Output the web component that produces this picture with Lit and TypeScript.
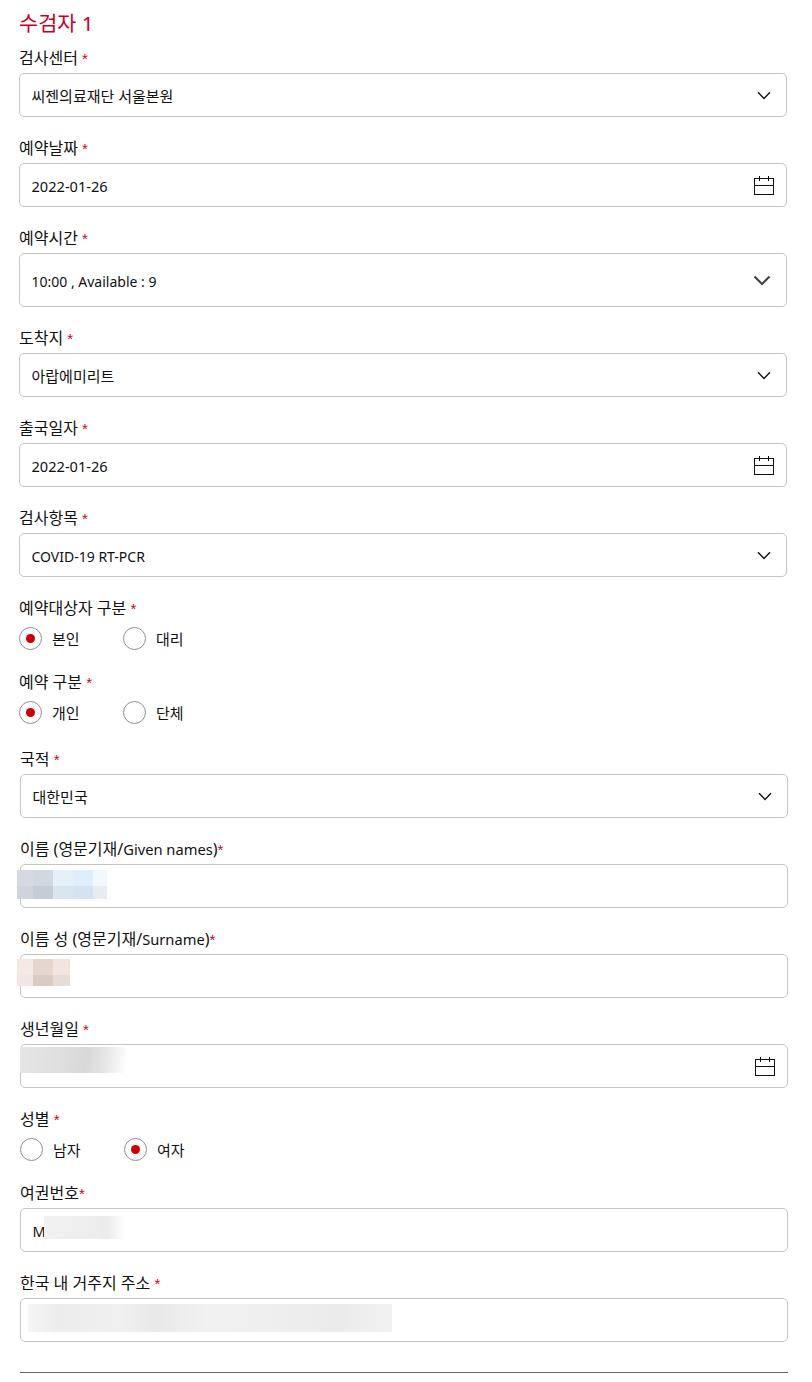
import { LitElement, html, css, svg } from "lit";
import { customElement } from "lit/decorators.js";

type Patch = { x: number; y: number; w: number; h: number; kind: string; cols?: number[]; top?: number; colors?: string[] };
type Field =
  | { type: "select" | "date" | "text" | "bigselect"; label: string; gap?: boolean; value?: string; vc?: string; patch?: Patch }
  | { type: "radio"; label: string; options: [string, boolean][] };

const chevron = svg`<svg class="chev" width="14" height="9" viewBox="0 0 14 9"><path d="M1 1.2 L7 7.4 L13 1.2" fill="none" stroke="#111" stroke-width="1.4"/></svg>`;
const bigChevron = svg`<svg class="chev big" width="18" height="11" viewBox="0 0 18 11"><path d="M1.5 1.5 L9 9 L16.5 1.5" fill="none" stroke="#444" stroke-width="2.2"/></svg>`;
const calendar = svg`<svg class="cal" width="20" height="19" viewBox="0 0 20 19" shape-rendering="crispEdges"><path d="M.5 2.5h19v16H.5zM.5 9.5h19M5.5 0v5M14.5 0v5" fill="none" stroke="#111" stroke-width="1"/></svg>`;

const groupA: Field[] = [
  { type: "select", label: "검사센터", gap: true, value: "씨젠의료재단 서울본원", vc: "ko" },
  { type: "date", label: "예약날짜", gap: true, value: "2022-01-26", vc: "num" },
  { type: "bigselect", label: "예약시간", gap: true, value: "10:00 , Available : 9", vc: "lat" },
  { type: "select", label: "도착지", gap: true, value: "아랍에미리트", vc: "ko" },
  { type: "date", label: "출국일자", gap: true, value: "2022-01-26", vc: "num" },
  { type: "select", label: "검사항목", gap: true, value: "COVID-19 RT-PCR", vc: "lat" },
  { type: "radio", label: "예약대상자 구분", options: [["본인", true], ["대리", false]] },
  { type: "radio", label: "예약 구분", options: [["개인", true], ["단체", false]] },
];
const groupB: Field[] = [
  { type: "select", label: "국적", gap: true, value: "대한민국", vc: "ko" },
  {
    type: "text", label: "이름 (영문기재/Given names)",
    patch: { x: -4, y: 5, w: 90, h: 29, top: 16, kind: "mosaic", cols: [16, 20, 20, 20, 14],
      colors: ["#d6d9e2", "#d2d8e0", "#e6f1f7", "#dfeefa", "#f1f9fe", "#ced3de", "#c5ccd5", "#d9e6ee", "#d5e3ee", "#e6ecf1"] },
  },
  {
    type: "text", label: "이름 성 (영문기재/Surname)",
    patch: { x: -4, y: 4, w: 53, h: 27, top: 16, kind: "mosaic", cols: [16, 20, 17],
      colors: ["#f4e9e5", "#e5d7d0", "#f0e5e1", "#f1e6e1", "#dccbc3", "#e7dcd8"] },
  },
  { type: "date", label: "생년월일", gap: true, patch: { x: -1, y: 2, w: 106, h: 26, kind: "dob" } },
  { type: "radio", label: "성별", options: [["남자", false], ["여자", true]] },
  { type: "text", label: "여권번호", value: "M", vc: "pm", patch: { x: 23, y: 7, w: 81, h: 23, kind: "pass" } },
  { type: "text", label: "한국 내 거주지 주소", gap: true, patch: { x: 7, y: 5, w: 364, h: 28, kind: "addr" } },
];

@customElement("app-root")
export class AppRoot extends LitElement {
  static styles = css`
    :host {
      display: block;
      width: 812px;
      height: 1382px;
      overflow: hidden;
      background: #fff;
      font-family: "Noto Sans", "Noto Sans CJK KR", sans-serif;
      color: #111;
    }
    .page { display: flex; flex-direction: column; }
    h2 {
      margin: 0;
      padding: 8px 0 0 19px;
      height: 46px;
      box-sizing: border-box;
      font-size: 20.8px;
      line-height: 30px;
      font-weight: 400;
      color: #c8001e;
    }
    .group { display: flex; flex-direction: column; width: 768px; }
    .a { margin-left: 19px; }
    .b { margin-left: 20px; margin-top: 3px; }
    .field { margin-bottom: 19px; }
    .field.radio { margin-bottom: 8px; }
    .label {
      height: 22px;
      line-height: 24px;
      font-size: 16px;
      margin-bottom: 5px;
      white-space: nowrap;
    }
    .label .lt { font-size: 14.7px; }
    .req { color: #c8001e; font-size: 15px; font-family: "Liberation Sans", sans-serif; }
    .box {
      position: relative;
      display: flex;
      align-items: center;
      justify-content: space-between;
      height: 44px;
      box-sizing: border-box;
      border: 1px solid #c4c4c4;
      border-radius: 5px;
      padding: 0 15px 0 11.5px;
      background: #fff;
    }
    .box.bigselect { height: 54px; }
    .box.date { padding-right: 12px; }
    .ko { font-size: 15px; }
    .num { font-size: 14.6px; padding-top: 2px; }
    .lat { font-size: 14px; padding-top: 2px; }
    .pm { font-size: 14.6px; padding-top: 2px; }
    .chev { display: block; }
    .radios { display: flex; height: 23px; align-items: center; margin-top: 9px; margin-bottom: 12px; }
    .opt { display: flex; align-items: center; width: 104px; font-size: 15px; }
    .circle {
      box-sizing: border-box;
      width: 23px;
      height: 23px;
      border: 1px solid #8f8f8f;
      border-radius: 50%;
      margin-right: 10px;
      display: flex;
      align-items: center;
      justify-content: center;
    }
    .dot { width: 9px; height: 9px; border-radius: 50%; background: #cc0000; }
    .patch { position: absolute; overflow: hidden; }
    .mosaic { display: grid; }
    .dob { background: linear-gradient(97deg, #e6e6e6 0%, #dedede 40%, #d8d8d8 62%, #e4e4e4 78%, #fff 100%); }
    .pass { background: linear-gradient(90deg, #f1f1f1 0%, #eeeeee 60%, #ebebeb 78%, #fff 100%); }
    .addr { background: linear-gradient(90deg, #f6f6f6, #ececec 8%, #f0f0f0 25%, #e9e9e9 35%, #f1f1f1 50%, #eeeeee 70%, #ebebeb 85%, #f2f2f2); }
    hr { border: 0; border-top: 1px solid #666; margin: 11px 0 0; width: 100%; }
  `;

  private patch(p?: Patch) {
    if (!p) return "";
    const pos = `left:${p.x}px;top:${p.y}px;width:${p.w}px;height:${p.h}px;`;
    if (p.kind === "mosaic") {
      return html`<div
        class="patch mosaic"
        style="${pos}grid-template-columns:${p.cols!.map((c) => c + "px").join(" ")};grid-template-rows:${p.top}px 1fr"
      >
        ${p.colors!.map((c) => html`<div style="background:${c}"></div>`)}
      </div>`;
    }
    return html`<div class="patch ${p.kind}" style="${pos}"></div>`;
  }

  private labelText(t: string) {
    return t.split(/([A-Za-z][A-Za-z ]*)/).map((part, i) => (i % 2 ? html`<span class="lt">${part}</span>` : part));
  }

  private renderField(f: Field) {
    const spaced = f.type === "radio" || ("gap" in f && f.gap);
    const label = html`<div class="label">${this.labelText(f.label)}${spaced ? " " : ""}<span class="req">*</span></div>`;
    if (f.type === "radio") {
      return html`<div class="field radio">
        ${label}
        <div class="radios">
          ${f.options.map(
            ([t, on]) => html`<div class="opt">
              <span class="circle">${on ? html`<span class="dot"></span>` : ""}</span>${t}
            </div>`
          )}
        </div>
      </div>`;
    }
    const icon = f.type === "date" ? calendar : f.type === "bigselect" ? bigChevron : f.type === "select" ? chevron : "";
    return html`<div class="field">
      ${label}
      <div class="box ${f.type}"><span class="${f.vc ?? ""}">${f.value ?? ""}</span>${icon}${this.patch(f.patch)}</div>
    </div>`;
  }

  render() {
    return html`<div class="page">
      <h2>수검자 1</h2>
      <div class="group a">${groupA.map((f) => this.renderField(f))}</div>
      <div class="group b">${groupB.map((f) => this.renderField(f))}<hr /></div>
    </div>`;
  }
}
